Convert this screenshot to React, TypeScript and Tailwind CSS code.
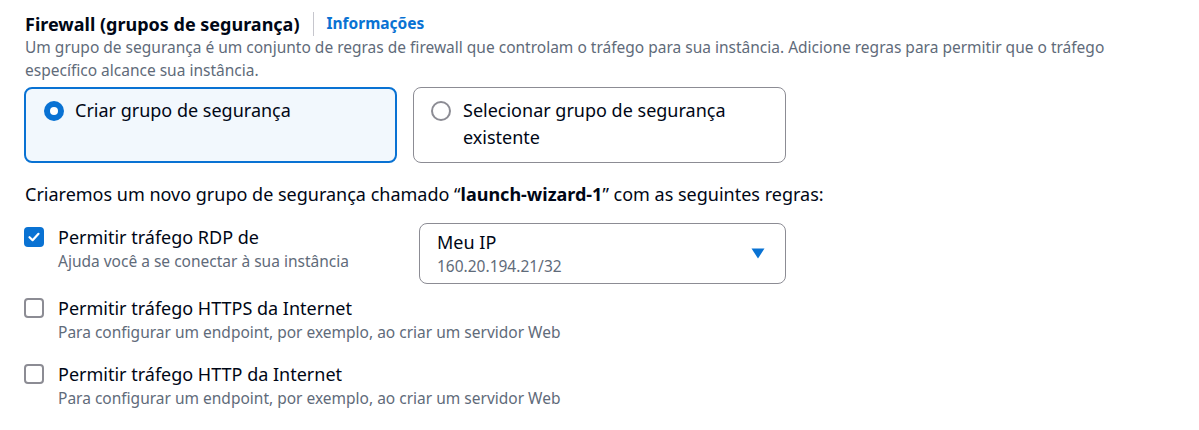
import React from "react";

const font = { fontFamily: '"Noto Sans", "Open Sans", Arial, sans-serif' };

function Radio({ checked }: { checked: boolean }) {
  return checked ? (
    <span className="mt-[4px] flex h-[20px] w-[20px] shrink-0 items-center justify-center rounded-full bg-[#0972d3]">
      <span className="h-[8px] w-[8px] rounded-full bg-white" />
    </span>
  ) : (
    <span className="mt-[4px] h-[20px] w-[20px] shrink-0 rounded-full border-2 border-[#8c8c94] bg-white" />
  );
}

function Checkbox({ checked }: { checked: boolean }) {
  return checked ? (
    <span className="mt-[3px] flex h-[20px] w-[20px] shrink-0 items-center justify-center rounded-[4px] bg-[#0972d3]">
      <svg width="14" height="14" viewBox="0 0 14 14" fill="none">
        <path d="M2.5 7.2 5.6 10.2 11.5 3.8" stroke="white" strokeWidth="2.2" strokeLinecap="round" strokeLinejoin="round" />
      </svg>
    </span>
  ) : (
    <span className="mt-[3px] h-[20px] w-[20px] shrink-0 rounded-[4px] border-2 border-[#8c8c94] bg-white" />
  );
}

interface RuleProps {
  checked: boolean;
  label: string;
  hint: string;
}

const Rule: React.FC<RuleProps> = ({ checked, label, hint }) => (
  <div className="flex gap-x-[14px]">
    <Checkbox checked={checked} />
    <div className="flex flex-col">
      <span className="text-[18px] leading-[26px] text-[#000716]">{label}</span>
      <span className="text-[15.5px] leading-[22px] text-[#5f6b7a]">{hint}</span>
    </div>
  </div>
);

export default function App() {
  return (
    <div className="min-h-[430px] w-full bg-white pl-[25px] pt-[11px]" style={font}>
      <div className="flex h-[25px] items-center">
        <h2 className="text-[18px] font-bold leading-[26px] text-[#000716]">Firewall (grupos de segurança)</h2>
        <span className="mx-[13px] h-[24px] w-px bg-[#c6c6cd]" />
        <a className="text-[15.5px] font-bold text-[#0972d3]">Informações</a>
      </div>
      <p className="w-[1130px] text-[15.5px] leading-[23px] text-[#5f6b7a]">
        Um grupo de segurança é um conjunto de regras de firewall que controlam o tráfego para sua instância. Adicione regras para permitir que o tráfego específico alcance sua instância.
      </p>

      <div className="mt-[5px] -ml-px grid w-[762px] grid-cols-2 gap-x-[16px]">
        <div className="flex h-[76px] gap-x-[11px] rounded-[8px] border-2 border-[#0972d3] bg-[#f2f8fd] pl-[18px] pr-[14px] pt-[8px]">
          <Radio checked />
          <span className="text-[18px] leading-[27px] text-[#000716]">Criar grupo de segurança</span>
        </div>
        <div className="flex h-[76px] gap-x-[12px] rounded-[8px] border border-[#8c8c94] bg-white pl-[17px] pr-[14px] pt-[9px]">
          <Radio checked={false} />
          <span className="text-[18px] leading-[27px] text-[#000716]">Selecionar grupo de segurança existente</span>
        </div>
      </div>

      <p className="mt-[18px] text-[18px] leading-[26px] text-[#000716]">
        Criaremos um novo grupo de segurança chamado “<b>launch-wizard-1</b>” com as seguintes regras:
      </p>

      <div className="mt-[17px] -ml-px flex flex-col">
        <div className="flex items-start">
          <div className="w-[395px]">
            <Rule checked label="Permitir tráfego RDP de" hint="Ajuda você a se conectar à sua instância" />
          </div>
          <div className="-mt-px flex h-[61px] w-[367px] items-center justify-between rounded-[8px] border border-[#8c8c94] pl-[17px] pr-[20px]">
            <div className="flex flex-col">
              <span className="text-[18px] leading-[25px] text-[#000716]">Meu IP</span>
              <span className="text-[15.5px] leading-[22px] text-[#5f6b7a]">160.20.194.21/32</span>
            </div>
            <svg width="14" height="11" viewBox="0 0 14 11">
              <path d="M0.5 0.5 H13.5 L7 10.5 Z" fill="#0972d3" />
            </svg>
          </div>
        </div>
        <div className="mt-[11px]">
          <Rule checked={false} label="Permitir tráfego HTTPS da Internet" hint="Para configurar um endpoint, por exemplo, ao criar um servidor Web" />
        </div>
        <div className="mt-[18px]">
          <Rule checked={false} label="Permitir tráfego HTTP da Internet" hint="Para configurar um endpoint, por exemplo, ao criar um servidor Web" />
        </div>
      </div>
    </div>
  );
}
